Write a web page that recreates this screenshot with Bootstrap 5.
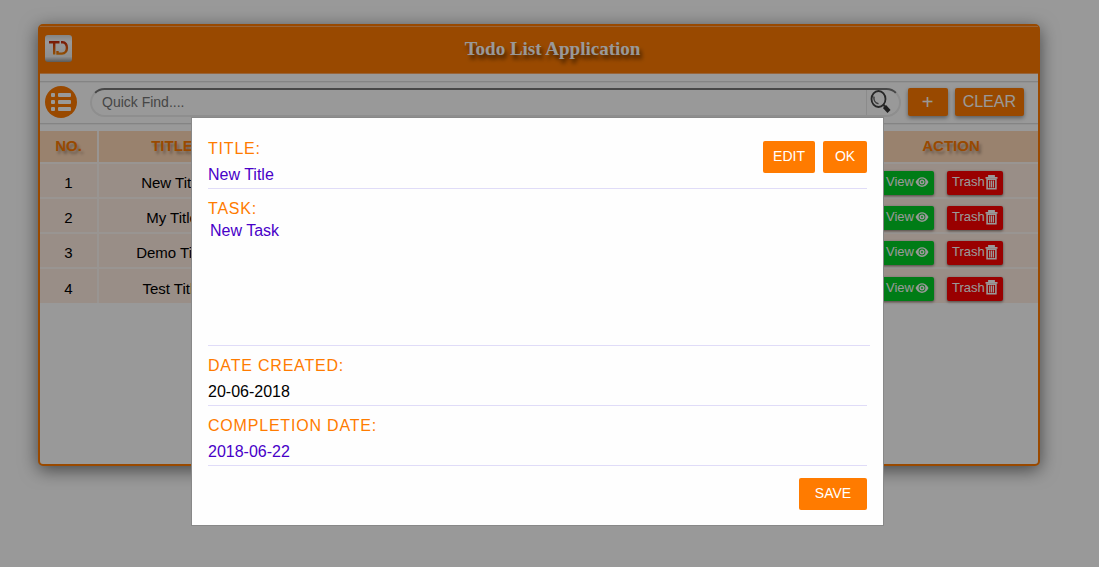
<!DOCTYPE html>
<html lang="en">
<head>
<meta charset="utf-8">
<meta name="viewport" content="width=device-width, initial-scale=1">
<title>Todo List Application</title>
<link href="https://cdn.jsdelivr.net/npm/bootstrap@5.3.0/dist/css/bootstrap.min.css" rel="stylesheet">
<style>
  :root { --brand: #ff7b00; }
  body { font-family: "Liberation Sans", Arial, sans-serif; font-size: 15px; color: #000; background: #fff; }
  .page { padding: 24px 59px 24px 38px; }
  .todo-app { min-height: 442px; border: 2px solid var(--brand); border-radius: 5px; background: #fff; box-shadow: 0 4px 18px rgba(0,0,0,.55); }
  .app-head { height: 48px; padding: 0 5px; background: var(--brand); border-top: 1px solid #ffa862; border-bottom: 1px solid #ffa862; }
  .app-head h1 { margin: 0; font: bold 19px/24px "Liberation Serif", "Times New Roman", serif; color: #fff; text-shadow: 2px 4px 4px rgba(0,0,0,.6); padding-bottom: 2px; }
  .app-head svg { margin-bottom: 3px; }
  .tools { height: 43px; margin-top: 7px; padding: 0 14px 1px 5px; gap: 7px; border-top: 1px solid #dcdcdc; border-bottom: 1px solid #dcdcdc; box-shadow: inset 0 1px #f4f4f4, 0 1px #f4f4f4; }
  .list-btn { width: 32px; height: 32px; }
  .finder { height: 29px; margin-left: 6px; border: 2px solid #ededed; border-top-color: #777; border-radius: 16px; overflow: hidden; }
  .finder input { border: 0; outline: 0; background: transparent; padding: 0 10px; font-size: 14px; min-width: 0; }
  .finder input::placeholder { color: #757575; opacity: 1; }
  .find-btn { width: 33px; border: 0; border-left: 1px solid #e8e8e8; background: transparent; padding: 0 0 0 2px; text-align: left; }
  .find-btn svg, .list-btn svg { display: block; }
  .btn-brand { --bs-btn-color: #fff; --bs-btn-bg: var(--brand); --bs-btn-border-color: var(--brand); --bs-btn-hover-color: #fff; --bs-btn-hover-bg: #e66f00; --bs-btn-border-radius: 2px; --bs-btn-border-width: 0; --bs-btn-font-size: 14px; --bs-btn-line-height: 20px; }
  .tools .btn-brand { height: 28px; --bs-btn-font-size: 16px; --bs-btn-padding-y: 4px; --bs-btn-padding-x: 8px; box-shadow: 0 2px 4px rgba(0,0,0,.4); }
  .tools .btn-add { width: 40px; --bs-btn-font-size: 20px; --bs-btn-padding-y: 2px; }
  .todo-table { margin: 7px 0 0; table-layout: fixed; text-align: center; --bs-table-bg: #ffede2; --bs-table-color: #000; border-color: #fff5ed; }
  .todo-table th, .todo-table td { padding: 0; vertical-align: middle; border-width: 0; line-height: 20px; }
  .todo-table th { height: 32px; padding-bottom: 2px; background: #ffd9b8; color: var(--brand); text-shadow: 2px 3px 3px rgba(0,0,0,.3); }
  .todo-table td { height: 35px; padding-top: 5px; border-top: 2px solid #fff8f3; }
  .todo-table th:first-child, .todo-table td:first-child { border-right: 2px solid #fff8f3; }
  .c-no { width: 58px; } .c-title { width: 147px; } .c-action { width: 174px; }
  .row-acts { gap: 13px; padding-left: 17px; }
  .btn-row { height: 24px; --bs-btn-padding-x: 5px; --bs-btn-padding-y: 0; --bs-btn-font-size: 13px; --bs-btn-line-height: 22px; --bs-btn-border-width: 0; --bs-btn-border-radius: 2px; --bs-btn-color: #fff; --bs-btn-hover-color: #fff; padding-bottom: 2px; box-shadow: 0 1px 3px rgba(0,0,0,.5); display: flex; align-items: center; }
  .act-view { --bs-btn-bg: #00cf26; --bs-btn-hover-bg: #00b822; gap: 1px; }
  .act-trash { --bs-btn-bg: #f00; --bs-btn-hover-bg: #d00; }
  .detail-modal { background: rgba(0,0,0,.4); padding: 117px 24px 24px 0; }
  .detail-modal .modal-dialog { max-width: 693px; margin: 0 auto; }
  .detail-modal .modal-content { border: 1px solid #888; border-radius: 0; background: #fefefe; }
  .detail-modal .modal-body { padding: 19px 16px 15px; font-size: 16px; }
  .lbl { display: block; line-height: 24px; color: var(--brand); letter-spacing: .05em; }
  .rule { border-bottom: 1px solid #e0dcf8; margin-bottom: 8px; }
  .val { display: block; width: 100%; height: 27px; border: 0; outline: 0; padding: 0; background: transparent; color: #4800c8; line-height: 20px; }
  .val-task { width: calc(100% + 3px); height: 125px; padding-left: 2px; border-bottom: 1px solid #e0dcf8; margin-bottom: 8px; resize: none; }
  .head-acts { gap: 8px; padding-top: 4px; }
  .detail-modal .btn-brand { height: 32px; padding: 5px 10px 7px; }
  .detail-modal .btn-ok { width: 44px; }
  .detail-modal .btn-save { width: 68px; }
  .save-row { padding-top: 4px; }
</style>
</head>
<body>
<main class="page">
  <section class="todo-app">
    <header class="app-head d-flex align-items-center">
      <a href="#" aria-label="Home" class="d-block">
        <svg class="d-block" width="27" height="27" viewBox="0 0 27 27">
          <defs>
            <linearGradient id="tile" x2="0" y2="1"><stop stop-color="#ddd"/><stop offset=".25" stop-color="#fff"/><stop offset=".8" stop-color="#eee"/><stop offset="1" stop-color="#999"/></linearGradient>
            <linearGradient id="mono" gradientUnits="userSpaceOnUse" x1="0" y1="5" x2="0" y2="20"><stop stop-color="#c4200c"/><stop offset="1" stop-color="#f58a08"/></linearGradient>
          </defs>
          <rect width="27" height="27" rx="3" fill="url(#tile)"/>
          <g fill="none" stroke="url(#mono)" stroke-width="2.4"><path d="M4 7.200h10.500M9.200 7v12.500M16 7.200h1.500c6 0 6 11.400-.5 11.400h-4.500v-2.500"/></g>
        </svg>
      </a>
      <h1 class="flex-grow-1 text-center">Todo List Application</h1>
    </header>

    <div class="tools d-flex align-items-center">
      <button type="button" class="list-btn btn p-0 border-0" aria-label="Show list">
        <svg width="32" height="32" viewBox="0 0 32 32">
          <circle cx="16" cy="16" r="16" fill="#ff7b00"/>
          <g fill="#fff"><rect x="6" y="7" width="4" height="4" rx="1"/><rect x="6" y="14" width="4" height="4" rx="1"/><rect x="6" y="21" width="4" height="4" rx="1"/><rect x="13" y="7" width="13" height="4" rx="1"/><rect x="13" y="14" width="13" height="4" rx="1"/><rect x="13" y="21" width="13" height="4" rx="1"/></g>
        </svg>
      </button>
      <div class="finder d-flex flex-grow-1">
        <input type="search" class="flex-grow-1" placeholder="Quick Find...." aria-label="Quick find">
        <button type="button" class="find-btn" aria-label="Search">
          <svg width="26" height="25" viewBox="0 0 26 25" fill="none">
            <ellipse cx="9.500" cy="9" rx="7" ry="8" stroke="#444" stroke-width="1.800"/>
            <path d="M5 6.500c-.6 3.500 1.200 6.500 4.500 7.300" stroke="#666" stroke-width="1.500"/>
            <path d="M14 14.500l2 2" stroke="#444" stroke-width="2.200"/>
            <path d="M15.500 16.500l4.500 5" stroke="#333" stroke-width="4.200"/>
          </svg>
        </button>
      </div>
      <button type="button" class="btn btn-brand btn-add" aria-label="Add task">+</button>
      <button type="button" class="btn btn-brand">CLEAR</button>
    </div>

    <table class="table todo-table">
      <colgroup><col class="c-no"><col class="c-title"><col><col class="c-action"></colgroup>
      <thead><tr><th scope="col">NO.</th><th scope="col">TITLE</th><th></th><th scope="col">ACTION</th></tr></thead>
      <tbody id="rows"></tbody>
    </table>
  </section>
</main>

<div class="modal detail-modal show d-block" role="dialog" aria-label="Task details">
  <div class="modal-dialog">
    <form class="modal-content">
      <div class="modal-body">
        <div class="rule d-flex align-items-start">
          <div class="flex-grow-1">
            <label class="lbl" for="title">TITLE:</label>
            <input class="val" id="title" value="New Title">
          </div>
          <div class="head-acts d-flex">
            <button type="button" class="btn btn-brand">EDIT</button>
            <button type="button" class="btn btn-brand btn-ok">OK</button>
          </div>
        </div>
        <label class="lbl" for="task">TASK:</label>
        <textarea class="val val-task" id="task">New Task</textarea>
        <div class="rule">
          <label class="lbl" for="created">DATE CREATED:</label>
          <input class="val text-black" id="created" value="20-06-2018" readonly>
        </div>
        <div class="rule">
          <label class="lbl" for="due">COMPLETION DATE:</label>
          <input class="val" id="due" value="2018-06-22">
        </div>
        <div class="save-row d-flex justify-content-end">
          <button type="button" class="btn btn-brand btn-save">SAVE</button>
        </div>
      </div>
    </form>
  </div>
</div>

<script src="https://cdn.jsdelivr.net/npm/bootstrap@5.3.0/dist/js/bootstrap.bundle.min.js"></script>
<script>
  const eye = '<svg width="14" height="12" viewBox="0 0 14 12"><path fill="#fff" fill-rule="evenodd" d="M.5 6C3.500-.5 10.500-.5 13.500 6 10.500 12.500 3.500 12.500.5 6zM7 2.600a3.400 3.400 0 1 0 0 6.800 3.400 3.400 0 0 0 0-6.800z"/><circle cx="7" cy="6" r="2.500" fill="#fff"/><circle cx="7" cy="6" r=".9" fill="#00cf26"/></svg>';
  const bin = '<svg width="13" height="15" viewBox="0 0 13 15" fill="none" stroke="#fff"><path stroke-width="1.800" d="M.5 2.800h12M4 2.500V1h5v1.500"/><path stroke-width="1.600" d="M2.100 4.200v9.500h8.800V4.200z"/><path stroke-width="1.200" d="M4.700 5.500v7M6.500 5.500v7M8.400 5.500v7"/></svg>';
  document.getElementById('rows').innerHTML = ['New Title', 'My Title', 'Demo Title', 'Test Title'].map((t, i) =>
    `<tr><td>${i + 1}</td><td>${t}</td><td></td><td><div class="row-acts d-flex"><button type="button" class="btn btn-row act-view">View${eye}</button><button type="button" class="btn btn-row act-trash">Trash${bin}</button></div></td></tr>`).join('');
</script>
</body>
</html>
